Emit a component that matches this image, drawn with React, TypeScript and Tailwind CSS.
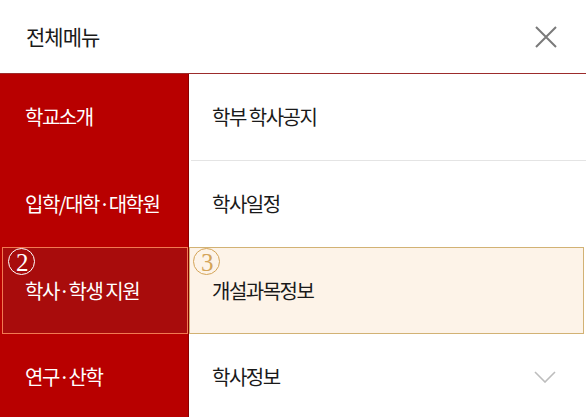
import React from "react";

const font = { fontFamily: '"Noto Sans CJK KR", "Noto Sans", sans-serif' };

function Circled({ n, cls }: { n: string; cls: string }) {
  return (
    <span
      className={`absolute flex h-[27px] w-[27px] items-center justify-center rounded-full border-[1.5px] text-[25px] leading-none ${cls}`}
      style={{ fontFamily: '"Liberation Serif", serif' }}
    >
      <span className="mt-[2px]">{n}</span>
    </span>
  );
}

export default function App() {
  const rows = [
    { left: "학교소개", right: "학부 학사공지", sep: true },
    { left: "입학/대학·대학원", right: "학사일정", sep: false },
    { left: "학사·학생 지원", right: "개설과목정보", hl: true },
    { left: "연구·산학", right: "학사정보", chevron: true },
  ];
  return (
    <div className="h-[417px] w-[586px] overflow-hidden bg-white text-[#222]" style={font}>
      <div className="flex h-[73px] items-center justify-between pl-[26px] pr-[28px]">
        <span className="text-[21px] tracking-[-1px] text-[#1a1a1a]">전체메뉴</span>
        <svg width="24" height="24" viewBox="0 0 24 24">
          <path d="M2 2 L22 22 M22 2 L2 22" stroke="#7a7a7a" strokeWidth="2" fill="none" />
        </svg>
      </div>
      <div className="h-px bg-[#9c2c2c]" />
      <div className="flex flex-col">
        {rows.map((r, i) => (
          <div key={i} className="flex h-[86.5px]">
            <div className="relative flex w-[188px] items-center bg-[#b80000] pl-[25px] text-[20px] tracking-[-1.5px] text-white">
              {r.hl && (
                <div className="absolute left-[2px] right-0 top-0 bottom-0 border-[1.5px] border-[#f27a52] bg-[#a80c0c]" />
              )}
              {r.hl && <Circled n="2" cls="left-[8px] top-[1px] border-white text-white" />}
              <span className={`relative ${r.hl ? "mt-[2px]" : ""}`}>{r.left}</span>
            </div>
            <div className="relative flex flex-1 items-center border-l border-[#8a0000] pl-[23px] pr-[30px] text-[20px] tracking-[-1.5px] text-[#1a1a1a]">
              {r.hl && (
                <div className="absolute left-0 right-[2px] top-0 bottom-0 border-[1.5px] border-[#d2b274] bg-[#fdf3e8]" />
              )}
              {r.hl && <Circled n="3" cls="left-[4px] top-[1px] border-[#d4a458] text-[#d4a458]" />}
              <span className={`relative flex-1 ${r.hl ? "mt-[2px]" : ""}`}>{r.right}</span>
              {r.chevron && (
                <svg width="22" height="12" viewBox="0 0 22 12" className="relative">
                  <path d="M1 1 L11 11 L21 1" stroke="#bdbdbd" strokeWidth="1.6" fill="none" />
                </svg>
              )}
              {r.sep && <div className="absolute bottom-0 left-[2px] right-0 h-px bg-[#e4e4e4]" />}
            </div>
          </div>
        ))}
      </div>
    </div>
  );
}
